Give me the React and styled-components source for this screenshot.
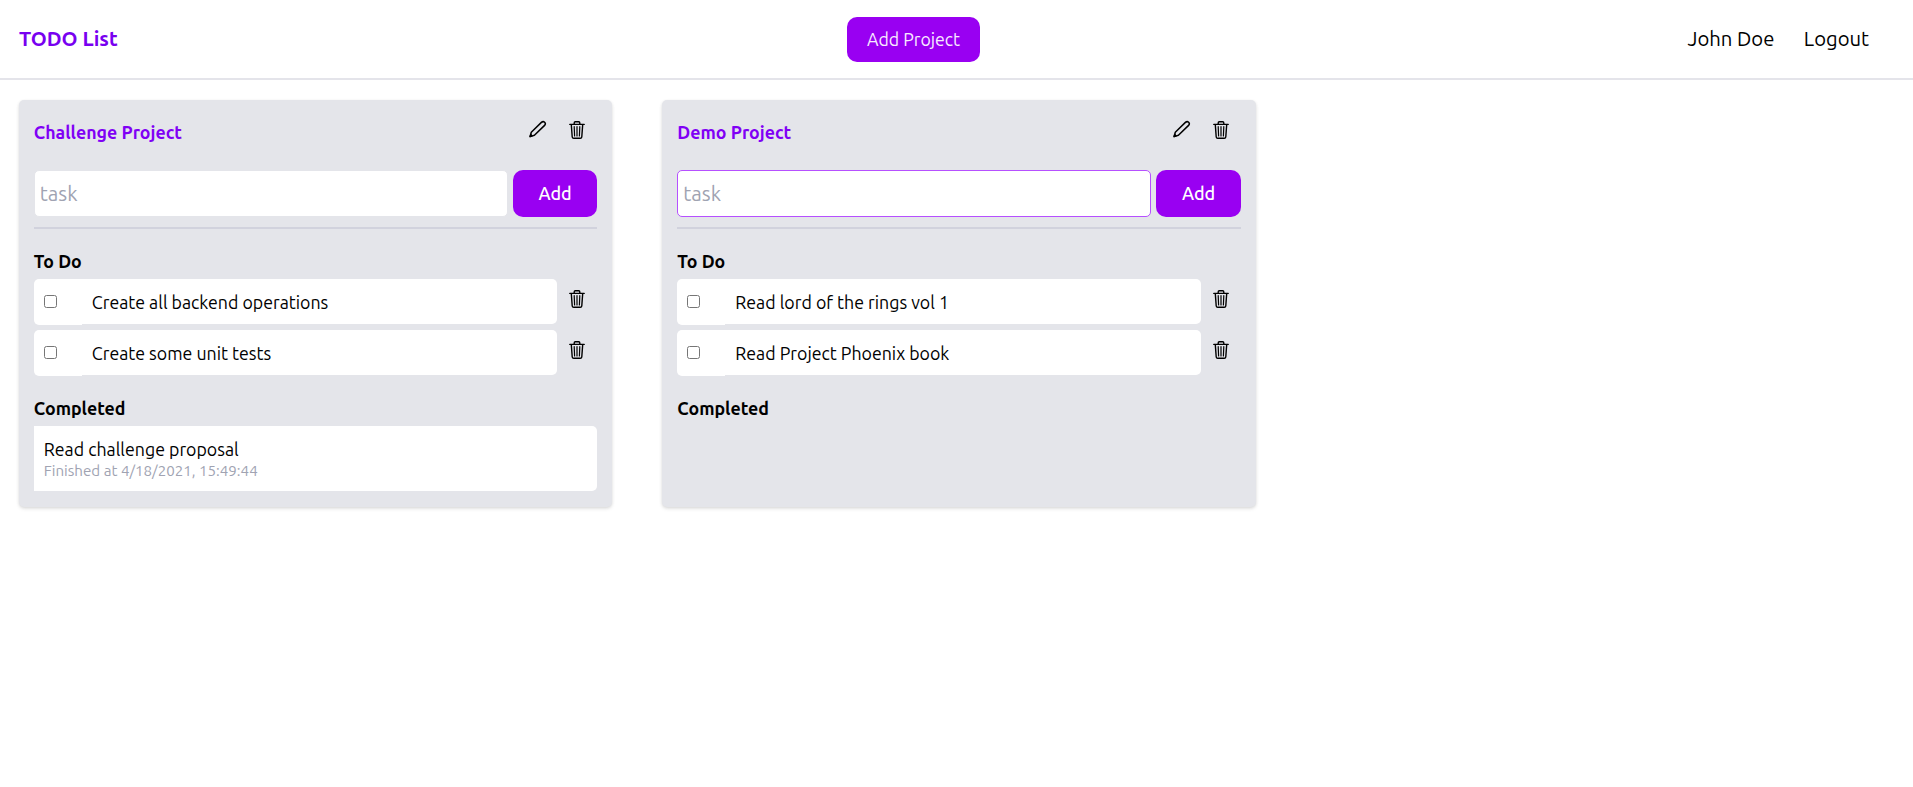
import React from 'react';
import styled, { createGlobalStyle } from 'styled-components';

const GlobalStyle = createGlobalStyle`
  *, *::before, *::after { box-sizing: border-box; }
  body {
    margin: 0;
    background: #fff;
    color: #000;
    font-family: Ubuntu, "Noto Sans", sans-serif;
    font-size: 17.75px;
    line-height: 24px;
  }
  h1, h2, h3, p, ul { margin: 0; padding: 0; }
  button, input { font-family: inherit; }
`;

const Header = styled.header`
  display: grid;
  grid-template-columns: 828px auto 1fr;
  align-items: center;
  height: 80px;
  padding: 0 44px 0 19px;
  border-bottom: 2px solid #e4e4ea;
`;

const Brand = styled.h1`
  color: #7800f0;
  font-size: 20.35px;
  font-weight: 700;
`;

const Nav = styled.nav`
  display: flex;
  justify-content: flex-end;
  gap: 29.5px;
`;

const NavLink = styled.a`
  font-size: 20.25px;
`;

const Button = styled.button`
  flex: none;
  display: flex;
  align-items: center;
  justify-content: center;
  border: 0;
  border-radius: 10px;
  background: #9900f2;
  color: #fff;
`;

const AddProjectButton = styled(Button)`
  width: 133px;
  height: 45px;
  margin-top: 1px;
  color: #f8ebff;
  font-size: 17.7px;
`;

const AddTaskButton = styled(Button)`
  width: 84.5px;
  height: 47px;
  padding-bottom: 2px;
  font-size: 18px;
  font-weight: 500;
`;

const Board = styled.main`
  display: flex;
  align-items: stretch;
  gap: 50px;
  padding: 20px 18.8px;
`;

const Card = styled.section`
  width: 593.5px;
  padding: 15px 15px 15.5px;
  border-radius: 5px;
  background: #e4e5ea;
  box-shadow: 0 1px 3px rgba(0, 0, 0, 0.1), 0 2px 4px rgba(0, 0, 0, 0.07);
`;

const CardHeader = styled.div`
  display: flex;
  align-items: flex-start;
  justify-content: space-between;
  height: 55px;
`;

const CardTitle = styled.h2`
  padding-top: 5px;
  color: #8000f5;
  font-size: 17.75px;
  font-weight: 700;
`;

const Actions = styled.div`
  display: flex;
  gap: 21px;
  padding: 5px 11px 0 0;
`;

const IconButton = styled.button`
  flex: none;
  display: block;
  width: 18px;
  height: 20px;
  padding: 0;
  border: 0;
  background: none;
  color: #000;
  svg { display: block; }
`;

const TaskForm = styled.form`
  display: flex;
  gap: 5px;
  padding-bottom: 10px;
  border-bottom: 2px solid #d1d2dd;
`;

const TaskInput = styled.input`
  flex: 1;
  min-width: 0;
  height: 47px;
  padding: 0 5px 1px;
  border: 1px solid ${(p) => (p.$active ? '#b650ff' : '#e4e5ea')};
  border-radius: 5px;
  outline: 0;
  background: #fff;
  font-size: 20.5px;
  &::placeholder { color: #a0a3b2; opacity: 1; }
`;

const SectionTitle = styled.h3`
  padding: 20px 0 6px;
  font-size: 17.75px;
  font-weight: 700;
`;

const TaskList = styled.ul`
  display: flex;
  flex-direction: column;
  gap: 5px;
  list-style: none;
`;

const TaskRow = styled.li`
  display: flex;
  align-items: flex-start;
  height: 46px;
  padding-right: 11px;
`;

const CheckCell = styled.label`
  flex: none;
  width: 48px;
  height: 46px;
  padding: 16px 0 0 10px;
  border-radius: 5px 0 0 5px;
  background: #fff;
`;

const Checkbox = styled.input.attrs({ type: 'checkbox' })`
  display: block;
  width: 13px;
  height: 13px;
  margin: 0;
`;

const TaskText = styled.p`
  flex: 1;
  height: 45px;
  margin-right: 11px;
  padding-left: 10px;
  border-radius: 0 5px 5px 0;
  background: #fff;
  line-height: 46px;
`;

const RowAction = styled.div`
  padding-top: 10px;
`;

const DoneItem = styled.div`
  height: 65px;
  padding: 11px 10px;
  border-radius: 0 5px 5px 0;
  background: #fff;
`;

const DoneDate = styled.p`
  color: #a0a3b2;
  font-size: 15.15px;
  line-height: 19px;
`;

const PencilIcon = () => (
  <svg width="18" height="20" viewBox="0 0 18 20" fill="none" stroke="currentColor" strokeWidth="1.5" strokeLinejoin="round" strokeLinecap="round">
    <path d="M1.1 16.6 L2.3 12.3 L12.4 2.4 Q14.1 0.9 15.6 2.2 Q17.1 3.7 15.6 5.4 L5.4 15.3 Z" />
    <path d="M1.1 16.6 L1.8 14.5 L3 15.9 Z" fill="currentColor" />
  </svg>
);

const TrashIcon = () => (
  <svg width="18" height="20" viewBox="0 0 18 20" fill="none" stroke="currentColor" strokeWidth="1.4" strokeLinecap="round" strokeLinejoin="round">
    <path d="M1.8 4.4H16.2M6.2 4.2V3Q6.2 1.8 7.3 1.8H10.7Q11.8 1.8 11.8 3V4.2" />
    <path d="M3.3 4.6 L4.2 16.8 Q4.4 18.3 5.7 18.3H12.3Q13.6 18.3 13.8 16.8 L14.7 4.6" />
    <path d="M6.2 6.6 L6.6 16M9 6.6V16M11.8 6.6L11.4 16" strokeWidth="1.2" />
  </svg>
);

const projects = [
  {
    name: 'Challenge Project',
    tasks: ['Create all backend operations', 'Create some unit tests'],
    done: [{ text: 'Read challenge proposal', date: '4/18/2021, 15:49:44' }],
  },
  {
    name: 'Demo Project',
    active: true,
    tasks: ['Read lord of the rings vol 1', 'Read Project Phoenix book'],
    done: [],
  },
];

function Project({ project }) {
  return (
    <Card>
      <CardHeader>
        <CardTitle>{project.name}</CardTitle>
        <Actions>
          <IconButton aria-label="Edit project"><PencilIcon /></IconButton>
          <IconButton aria-label="Delete project"><TrashIcon /></IconButton>
        </Actions>
      </CardHeader>
      <TaskForm onSubmit={(e) => e.preventDefault()}>
        <TaskInput placeholder="task" $active={project.active} />
        <AddTaskButton>Add</AddTaskButton>
      </TaskForm>
      <SectionTitle>To Do</SectionTitle>
      <TaskList>
        {project.tasks.map((task) => (
          <TaskRow key={task}>
            <CheckCell><Checkbox /></CheckCell>
            <TaskText>{task}</TaskText>
            <RowAction>
              <IconButton aria-label="Delete task"><TrashIcon /></IconButton>
            </RowAction>
          </TaskRow>
        ))}
      </TaskList>
      <SectionTitle>Completed</SectionTitle>
      {project.done.map((item) => (
        <DoneItem key={item.text}>
          <p>{item.text}</p>
          <DoneDate>Finished at {item.date}</DoneDate>
        </DoneItem>
      ))}
    </Card>
  );
}

export default function App() {
  return (
    <>
      <GlobalStyle />
      <Header>
        <Brand>TODO List</Brand>
        <AddProjectButton>Add Project</AddProjectButton>
        <Nav>
          <NavLink>John Doe</NavLink>
          <NavLink>Logout</NavLink>
        </Nav>
      </Header>
      <Board>
        {projects.map((project) => <Project key={project.name} project={project} />)}
      </Board>
    </>
  );
}
